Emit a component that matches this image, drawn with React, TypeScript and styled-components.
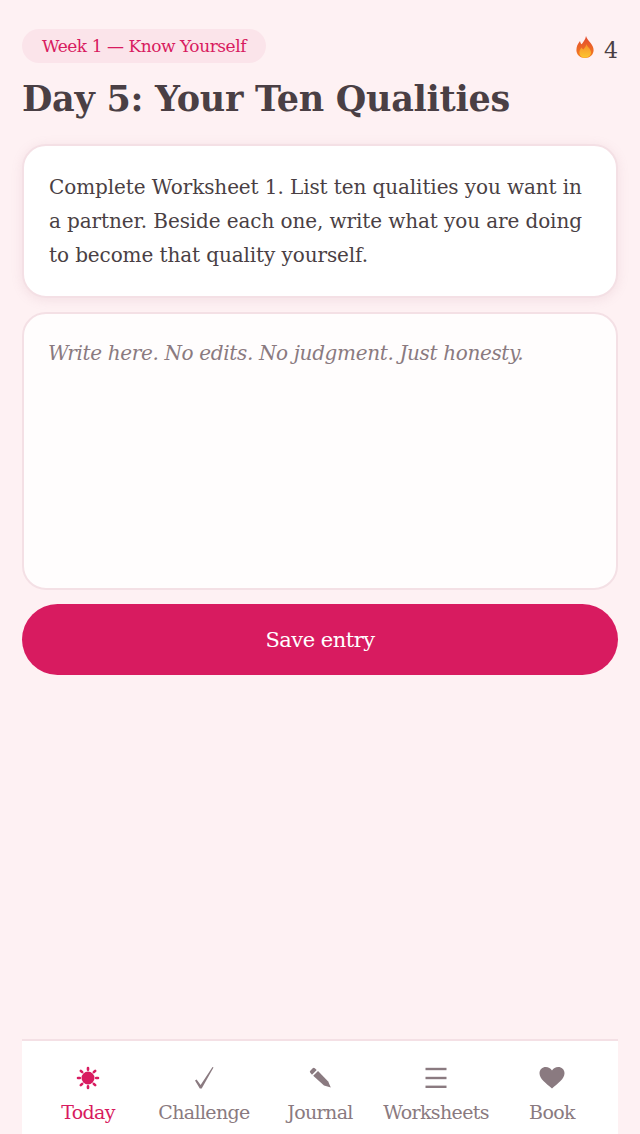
import React from 'react'
import styled, { createGlobalStyle } from 'styled-components'

const GlobalStyle = createGlobalStyle`
  html, body {
    margin: 0;
    padding: 0;
    height: 100%;
    background: #fef1f3;
  }
  #root {
    height: 100%;
  }
`

const Screen = styled.div`
  height: 1134px;
  box-sizing: border-box;
  padding: 29px 22px 0;
  display: flex;
  flex-direction: column;
  font-family: 'DejaVu Serif', 'Liberation Serif', serif;
  color: #4a3f44;
  overflow: hidden;
`
const TopRow = styled.div`
  display: flex;
  justify-content: space-between;
  align-items: center;
`
const WeekPill = styled.div`
  background: #fbe4ea;
  color: #d81b60;
  border-radius: 18px;
  height: 34px;
  line-height: 34px;
  padding: 0 20px;
  font-size: 17px;
  letter-spacing: -0.45px;
`
const Streak = styled.div`
  display: flex;
  align-items: center;
  gap: 10px;
  font-size: 22px;
  svg {
    display: block;
    margin-top: 2px;
  }
`
const StreakCount = styled.span`
  line-height: 24px;
  margin-top: 10px;
`
const Title = styled.h1`
  margin: 11px 0 0;
  font-size: 35px;
  line-height: 50px;
  font-weight: 700;
  letter-spacing: -0.28px;
`
const Card = styled.div`
  margin-top: 20px;
  background: #fff;
  border: 2px solid #f4e0e5;
  border-radius: 24px;
  box-shadow: 0 2px 12px rgba(180, 120, 140, 0.14);
  padding: 24px 25px;
  font-size: 20px;
  line-height: 34px;
  letter-spacing: -0.1px;
`
const Entry = styled.textarea`
  display: block;
  margin-top: 14px;
  width: 100%;
  height: 278px;
  box-sizing: border-box;
  background: #fffdfd;
  border: 2px solid #f4e0e5;
  border-radius: 24px;
  padding: 23px 24px;
  resize: none;
  outline: none;
  font-family: inherit;
  font-size: 20px;
  line-height: 32px;
  letter-spacing: -0.35px;
  &::placeholder {
    color: #8a7a80;
    font-style: italic;
    opacity: 1;
  }
`
const SaveButton = styled.button`
  margin-top: 14px;
  height: 71px;
  border: none;
  border-radius: 36px;
  background: #d81b60;
  color: #fff;
  font-family: inherit;
  font-size: 21px;
  letter-spacing: -0.5px;
`
const Spacer = styled.div`
  flex: 1;
`
const TabBar = styled.nav`
  display: grid;
  grid-template-columns: repeat(5, 1fr);
  height: 95px;
  box-sizing: border-box;
  padding: 0 8px;
  background: #fff;
  border-top: 2px solid #f4e0e5;
`
const Tab = styled.div<{ $active?: boolean }>`
  display: flex;
  flex-direction: column;
  align-items: center;
  padding-top: 25px;
  gap: 10px;
  font-size: 19px;
  line-height: 24px;
  letter-spacing: -0.65px;
  white-space: nowrap;
  color: ${(p) => (p.$active ? '#d81b60' : '#8a7a80')};
  svg {
    display: block;
  }
`

const Flame = () => (
  <svg width="18" height="22" viewBox="0 0 18 22">
    <defs>
      <linearGradient id="flameOuter" x1="0" y1="0" x2="0" y2="1">
        <stop offset="0" stopColor="#e2492f" />
        <stop offset="1" stopColor="#f5801f" />
      </linearGradient>
      <linearGradient id="flameInner" x1="0" y1="0" x2="0" y2="1">
        <stop offset="0" stopColor="#f7902a" />
        <stop offset="1" stopColor="#fcc62f" />
      </linearGradient>
    </defs>
    <path
      d="M10 0c.6 2.600 2.600 4.300 4.600 7 1.800 2.400 3 4.600 3 7.300C17.600 18.800 13.800 22 9 22s-8.600-3.200-8.600-7.700c0-3.800 1.300-6.400 3.600-9.300.3 1.600.8 2.500 1.700 3.200C7.200 6 9.600 3.400 10 0z"
      fill="url(#flameOuter)"
    />
    <path
      d="M10.500 8c.3 2.800 4.500 4.600 4.500 8.600 0 3-2.700 5.100-5.800 5.100s-5.800-2-5.800-5c0-2.300 1.100-3.800 2.300-5.200.4 1 .9 1.600 1.700 2C8.600 12 10.200 10.300 10.500 8z"
      fill="url(#flameInner)"
    />
  </svg>
)

const SunIcon = () => (
  <svg width="24" height="24" viewBox="0 0 24 24" fill="currentColor" stroke="currentColor">
    <circle cx="12" cy="12" r="6.500" stroke="none" />
    <path
      strokeWidth="2.600"
      strokeLinecap="round"
      d="M12 2v1.800M12 20.200V22M2 12h1.800M20.200 12H22M4.800 4.800l1.400 1.400M17.800 17.800l1.400 1.400M4.800 19.200l1.400-1.400M17.800 6.200l1.400-1.400"
    />
  </svg>
)
const CheckIcon = () => (
  <svg width="24" height="24" viewBox="0 0 24 24" fill="currentColor">
    <path d="M3 14.500L4.600 13.500 8.600 19 20.500 1 21.500 1.500 9.700 22.500H7.800z" />
  </svg>
)
const PencilIcon = () => (
  <svg width="24" height="24" viewBox="0 0 24 24" fill="currentColor">
    <path d="M2.300 4.700L4.700 2.300a1.500 1.500 0 0 1 2.100 0L8.700 4 4 8.700 2.300 6.800a1.500 1.500 0 0 1 0-2.100z" />
    <path d="M5.200 9.800L10 5 20.200 15.600 22.800 21.500 16 19.600z" />
  </svg>
)
const MenuIcon = () => (
  <svg width="24" height="24" viewBox="0 0 24 24" fill="currentColor">
    <rect x="1.500" y="1.800" width="21" height="2.400" />
    <rect x="1.500" y="10.800" width="21" height="2.400" />
    <rect x="1.500" y="19.600" width="21" height="2.400" />
  </svg>
)
const HeartIcon = () => (
  <svg width="26" height="24" viewBox="0 0 26 24" fill="currentColor">
    <path d="M13 22.500C7 17 0.500 13 0.500 7.200 0.500 3.400 3.400 1 6.800 1c2.600 0 4.900 1.300 6.200 3.600C14.300 2.300 16.600 1 19.200 1c3.400 0 6.300 2.400 6.300 6.200C25.500 13 19 17 13 22.500z" />
  </svg>
)

const tabs = [
  { label: 'Today', icon: <SunIcon />, active: true },
  { label: 'Challenge', icon: <CheckIcon /> },
  { label: 'Journal', icon: <PencilIcon /> },
  { label: 'Worksheets', icon: <MenuIcon /> },
  { label: 'Book', icon: <HeartIcon /> },
]

export default function App() {
  return (
    <>
      <GlobalStyle />
      <Screen>
        <TopRow>
          <WeekPill>Week 1 — Know Yourself</WeekPill>
          <Streak>
            <Flame />
            <StreakCount>4</StreakCount>
          </Streak>
        </TopRow>
        <Title>Day 5: Your Ten Qualities</Title>
        <Card>
          Complete Worksheet 1. List ten qualities you want in a partner. Beside each one, write what you are doing to
          become that quality yourself.
        </Card>
        <Entry placeholder="Write here. No edits. No judgment. Just honesty." />
        <SaveButton>Save entry</SaveButton>
        <Spacer />
        <TabBar>
          {tabs.map((tab) => (
            <Tab key={tab.label} $active={tab.active}>
              {tab.icon}
              {tab.label}
            </Tab>
          ))}
        </TabBar>
      </Screen>
    </>
  )
}
